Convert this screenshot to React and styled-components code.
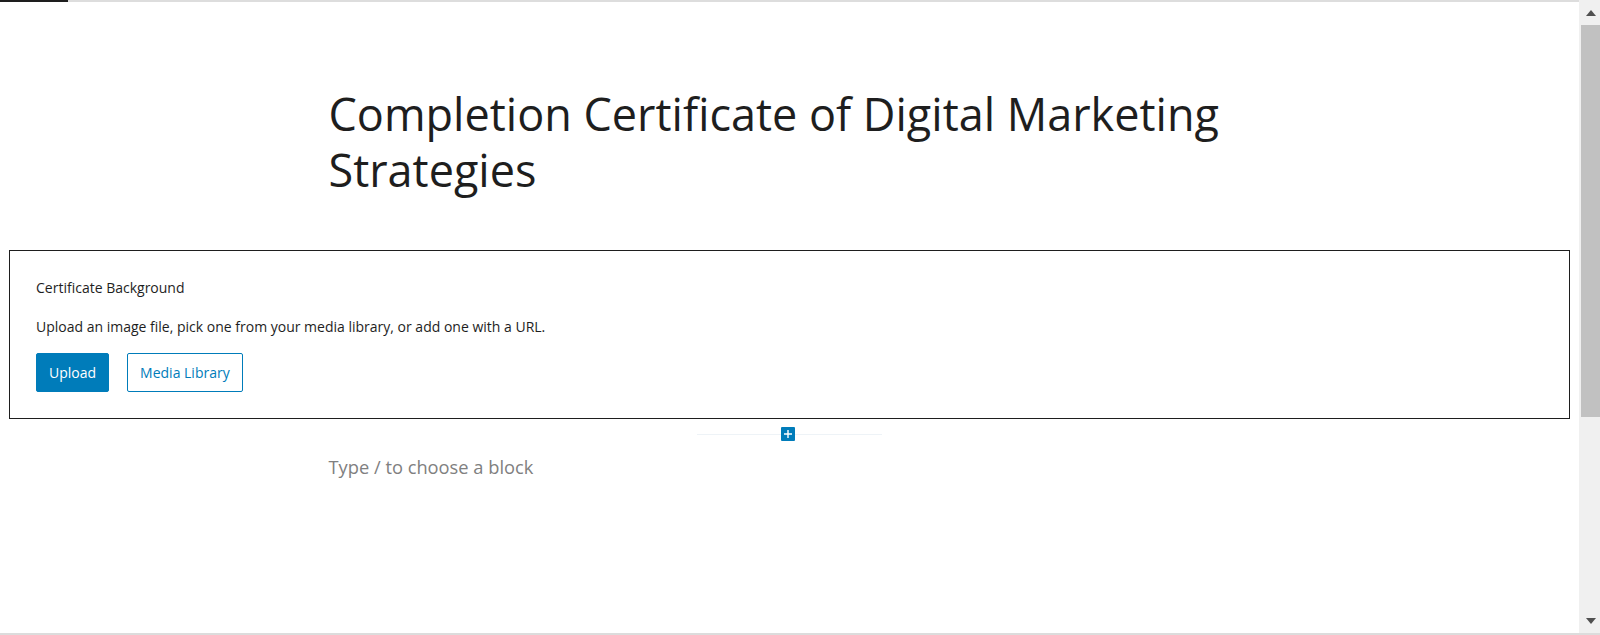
import React from "react";
import styled, { createGlobalStyle } from "styled-components";

const Global = createGlobalStyle`
  html, body {
    margin: 0;
    padding: 0;
    height: 635px;
    overflow: hidden;
    background: #fff;
  }
  * {
    box-sizing: border-box;
  }
`;

const Frame = styled.div`
  display: flex;
  width: 1600px;
  height: 635px;
  border-bottom: 2px solid #dcdcdc;
  font-family: "Open Sans", "Noto Sans", sans-serif;
  color: #1e1e1e;
`;

const Canvas = styled.div`
  flex: 1;
  display: flex;
  flex-direction: column;
  min-width: 0;
`;

const TopRule = styled.div`
  height: 2px;
  background: #dddddd;
  display: flex;

  span {
    width: 68px;
    background: #1e1e1e;
  }
`;

const Column = styled.div`
  width: 922px;
  margin: 0 auto;
`;

const Title = styled.h1`
  margin: 0;
  padding-top: 84px;
  padding-bottom: 52px;
  font-size: 45px;
  line-height: 56px;
  font-weight: 400;
  color: #1e1e1e;
`;

const Placeholder = styled.div`
  margin: 0 9px;
  border: 1px solid #1e1e1e;
  padding: 27px 26px 26px;
  height: 169px;
`;

const Label = styled.div`
  font-size: 14px;
  line-height: 20px;
  margin-bottom: 19px;
`;

const Instructions = styled.div`
  font-size: 14px;
  line-height: 20px;
  margin-bottom: 16px;
`;

const Actions = styled.div`
  display: flex;
  gap: 18px;
`;

const Button = styled.button`
  height: 39px;
  padding: 0 12px;
  font-family: inherit;
  font-size: 14px;
  border-radius: 2px;
  cursor: pointer;
  border: 1px solid #007cba;
  background: ${(p) => (p.$primary ? "#007cba" : "#fff")};
  color: ${(p) => (p.$primary ? "#fff" : "#007cba")};
  font-weight: ${(p) => (p.$primary ? 500 : 400)};
`;

const Inserter = styled.div`
  display: flex;
  align-items: center;
  justify-content: center;
  width: 185px;
  margin: 8px auto 0;
  padding-right: 3px;
  height: 14px;
  position: relative;

  &::before {
    content: "";
    position: absolute;
    left: 0;
    right: 0;
    top: 7px;
    height: 1px;
    background: #eef3f7;
  }
`;

const PlusButton = styled.div`
  position: relative;
  width: 14px;
  height: 14px;
  background: #007cba;
  border-radius: 1px;
  display: flex;
  align-items: center;
  justify-content: center;
`;

const Appender = styled.div`
  font-size: 18.3px;
  line-height: 28px;
  color: #808080;
  margin-top: 12px;
`;

const Scrollbar = styled.div`
  width: 21px;
  background: #f0f0f0;
  display: flex;
  flex-direction: column;
  align-items: center;
  padding-left: 2px;
`;

const Arrow = styled.div`
  height: 25px;
  display: flex;
  align-items: center;
  justify-content: center;
  width: 100%;
`;

const Thumb = styled.div`
  width: 100%;
  height: 392px;
  background: #c1c1c1;
`;

const Track = styled.div`
  flex: 1;
`;

export default function App() {
  return (
    <>
      <Global />
      <Frame>
        <Canvas>
          <TopRule>
            <span />
          </TopRule>
          <Column>
            <Title>Completion Certificate of Digital Marketing Strategies</Title>
          </Column>
          <Placeholder>
            <Label>Certificate Background</Label>
            <Instructions>
              Upload an image file, pick one from your media library, or add one with a URL.
            </Instructions>
            <Actions>
              <Button $primary>Upload</Button>
              <Button>Media Library</Button>
            </Actions>
          </Placeholder>
          <Inserter>
            <PlusButton>
              <svg width="10" height="10" viewBox="0 0 10 10">
                <path d="M5 1v8M1 5h8" stroke="#fff" strokeWidth="1.4" />
              </svg>
            </PlusButton>
          </Inserter>
          <Column>
            <Appender>Type / to choose a block</Appender>
          </Column>
        </Canvas>
        <Scrollbar>
          <Arrow>
            <svg width="10" height="6" viewBox="0 0 10 6">
              <path d="M0 6L5 0L10 6Z" fill="#505050" />
            </svg>
          </Arrow>
          <Thumb />
          <Track />
          <Arrow>
            <svg width="10" height="6" viewBox="0 0 10 6">
              <path d="M0 0L5 6L10 0Z" fill="#505050" />
            </svg>
          </Arrow>
        </Scrollbar>
      </Frame>
    </>
  );
}
